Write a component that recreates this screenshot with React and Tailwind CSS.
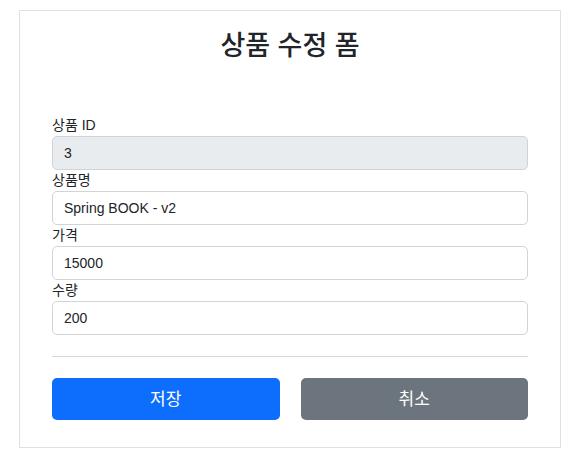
const FONT = "font-['Liberation_Sans','Noto_Sans_CJK_KR',sans-serif]"

const fields = [
  { label: '상품 ID', value: '3', disabled: true },
  { label: '상품명', value: 'Spring BOOK - v2' },
  { label: '가격', value: '15000' },
  { label: '수량', value: '200' },
]

export default function App() {
  return (
    <div className={`min-h-[467px] bg-white pt-[10px] text-[#212529] ${FONT}`}>
      <div className="ml-[19px] w-[542px] border border-[#dee2e6] px-[32px] pt-[19px] pb-[27px]">
        {/* header */}
        <div className="text-center">
          <h2 className="text-[27px] leading-[1.2] font-medium">상품 수정 폼</h2>
        </div>

        <form className="mt-[53px]" onSubmit={(e) => e.preventDefault()}>
          {fields.map((f) => (
            <div key={f.label}>
              <label className="block text-[14px] leading-[21px]">{f.label}</label>
              <input
                defaultValue={f.value}
                disabled={f.disabled}
                className={`block h-[34px] w-full rounded-[5px] border border-[#ced4da] px-[11px] text-[14px] text-[#212529] outline-none ${
                  f.disabled ? 'bg-[#e9ecef]' : 'bg-white'
                }`}
              />
            </div>
          ))}

          <hr className="my-[21px] border-t border-[#d6d8db]" />

          <div className="grid grid-cols-2 gap-[21px]">
            <button className="h-[42px] rounded-[5px] bg-[#0d6efd] text-[17px] text-white">저장</button>
            <button type="button" className="h-[42px] rounded-[5px] bg-[#6c757d] text-[17px] text-white">취소</button>
          </div>
        </form>
      </div>
    </div>
  )
}
